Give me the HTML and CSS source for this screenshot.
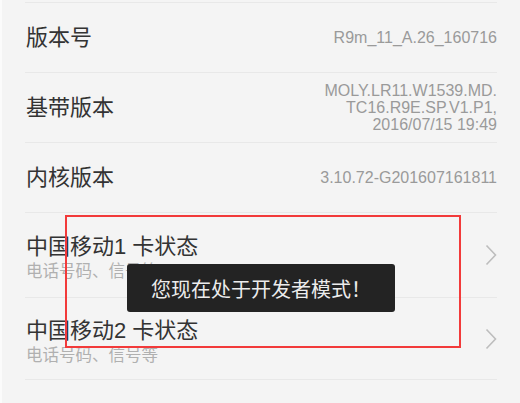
FILE: index.html
```html
<!DOCTYPE html>
<html lang="zh-CN">
<head>
  <meta charset="UTF-8">
  <title>关于手机</title>
  <meta name="viewport" content="width=device-width, initial-scale=1">
  <link rel="stylesheet" href="styles.css">
</head>
<body>
  <div class="page">
    <ul class="list">
      <li class="row">
        <div class="label">版本号</div>
        <div class="value">R9m_11_A.26_160716</div>
      </li>
      <li class="row">
        <div class="label">基带版本</div>
        <div class="value">MOLY.LR11.W1539.MD.<br>TC16.R9E.SP.V1.P1,<br>2016/07/15 19:49</div>
      </li>
      <li class="row">
        <div class="label">内核版本</div>
        <div class="value">3.10.72-G201607161811</div>
      </li>
      <li class="row tall">
        <div class="text">
          <div class="label">中国移动1 卡状态</div>
          <div class="sub">电话号码、信号等</div>
        </div>
        <svg class="chev" width="12" height="22" viewBox="0 0 12 22"><path d="M1.5 1.5 L10.5 11 L1.5 20.5" fill="none" stroke="#bdbdbd" stroke-width="1.6"/></svg>
      </li>
      <li class="row tall">
        <div class="text">
          <div class="label">中国移动2 卡状态</div>
          <div class="sub">电话号码、信号等</div>
        </div>
        <svg class="chev" width="12" height="22" viewBox="0 0 12 22"><path d="M1.5 1.5 L10.5 11 L1.5 20.5" fill="none" stroke="#bdbdbd" stroke-width="1.6"/></svg>
      </li>
    </ul>

    <!-- highlight + toast drawn over the list -->
    <div class="mark"></div>
    <div class="toast">您现在处于开发者模式！</div>
  </div>
</body>
</html>
```

FILE: styles.css
```css
body { margin: 0; background: #f4f4f4; font-family: "Liberation Sans", "Noto Sans CJK SC", sans-serif; }
.page { position: relative; height: 403px; overflow: hidden; border-left: 2px solid #fbfbfb; background: #f4f4f4; }
.list { list-style: none; margin: 0 23px 0 23px; padding: 2px 0 0; }
.row {
  display: flex; align-items: center; justify-content: space-between;
  height: 70px; box-sizing: border-box; padding-left: 1px;
  border-top: 1px solid #e8e8e8;
}
.row:last-child { border-bottom: 1px solid #e8e8e8; }
.row.tall { height: 85px; }
.row.tall:last-child { height: 83px; }
.label { font-size: 22px; color: #333; line-height: 24px; }
.value { font-size: 16px; line-height: 17px; color: #9a9a9a; text-align: right; }
.text { display: flex; flex-direction: column; margin-top: 6px; }
.sub { font-size: 16.5px; line-height: 20px; color: #b0b0b0; margin-top: 2px; }
.mark {
  position: absolute; left: 63px; top: 215px; width: 392px; height: 129px;
  border: 2px solid #f23a3a;
}
.toast {
  position: absolute; left: 125px; top: 264px; width: 268px; height: 48px;
  background: #232323; border-radius: 3px; color: #ececec;
  font-family: "Noto Sans CJK SC", sans-serif; font-size: 20px;
  display: flex; align-items: center; justify-content: center;
}
```
